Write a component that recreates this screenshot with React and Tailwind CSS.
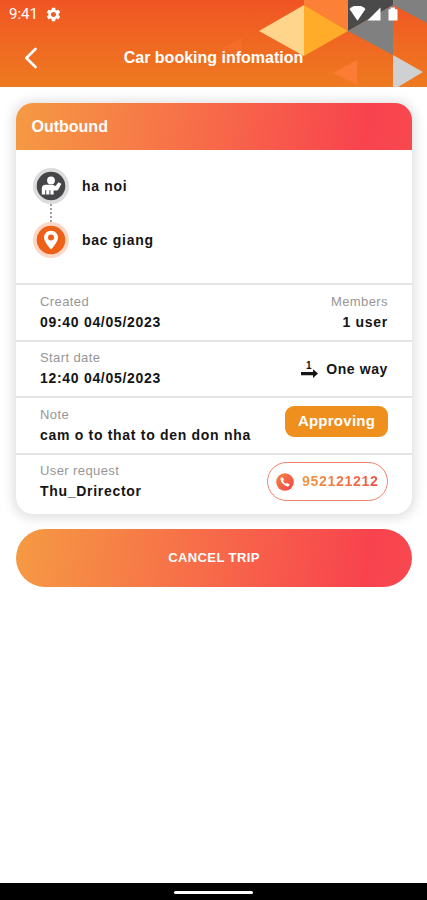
import React from 'react';
import { MdSettings } from 'react-icons/md';

const trip = {
    from: 'ha noi',
    to: 'bac giang',
    created: '09:40 04/05/2023',
    members: '1 user',
    startDate: '12:40 04/05/2023',
    note: 'cam o to that to den don nha',
    status: 'Approving',
    requester: 'Thu_Drirector',
    phone: '952121212',
};

const HeaderPattern = () => (
    <svg className="absolute inset-0" width="427" height="87" viewBox="0 0 427 87">
        <path d="M221 49L242 38V56Z" fill="#f9702f" opacity="0.6" />
        <path d="M333 73L357 60V85Z" fill="#fc7c35" />
        <path d="M304 0H348V31L304 5Z" fill="#fc8036" />
        <path d="M259 31L304 5V56Z" fill="#ffd58c" />
        <path d="M304 5L348 31L304 56Z" fill="#ffac2b" />
        <path d="M348 0H393V5L348 31Z" fill="#4b4a4b" />
        <path d="M348 31L393 5V55Z" fill="#808080" />
        <path d="M393 0H427V23L393 5Z" fill="#808080" />
        <path d="M393 55L423 72L398 87H393Z" fill="#cfd0d1" />
    </svg>
);

const StatusIcons = () => (
    <svg width="50" height="16" viewBox="0 0 50 16" fill="#fff">
        <path d="M0.5 7.5C4.8 4.5 12.2 4.5 16.5 7.5L8.5 14.8Z" transform="translate(0 -9) scale(1 1.6)" />
        <path d="M18.5 14.5L31.5 1.5V14.5Z" />
        <path d="M39.5 3.3H41.5V1.5H46V3.3H48.5V14.5H39.5Z" />
    </svg>
);

const Header = () => (
    <header className="relative h-[87px] shrink-0 overflow-hidden bg-linear-to-b from-[#f05423] to-[#ee7a20] text-white">
        <HeaderPattern />
        <div className="relative flex h-7 items-center justify-between pr-[28px] pl-[9px]">
            <div className="flex items-center gap-[7px]">
                <span className="font-['Roboto',sans-serif] text-[15px]">9:41</span>
                <MdSettings size={17} />
            </div>
            <StatusIcons />
        </div>
        <div className="relative flex h-[59px] items-center">
            <button type="button" className="ml-6 w-[14px]" aria-label="Back">
                <svg width="14" height="22" viewBox="0 0 14 22" fill="none" stroke="#fff" strokeWidth="2.6" strokeLinecap="round" strokeLinejoin="round">
                    <path d="M11.5 2L2.3 11L11.5 20" />
                </svg>
            </button>
            <h1 className="mr-[38px] flex-1 text-center text-[16px] font-bold">Car booking infomation</h1>
        </div>
    </header>
);

const PassengerIcon = () => (
    <svg width="36" height="36" viewBox="0 0 36 36">
        <circle cx="18" cy="18" r="18" fill="#dcdcdc" />
        <circle cx="18" cy="18" r="14.3" fill="#464547" />
        <circle cx="18" cy="12.4" r="3.9" fill="#fff" />
        <path d="M8.8 26.4V20.6Q8.8 16.8 12.6 16.8H19.5L22.6 18L25.4 14.2L28.4 15.8L25.4 21.4Q24.8 22.4 23.5 22.4H20.6V26.4H17.4V22.2H16.4V26.4H13.2V22.2H12.2V26.4Z" fill="#fff" />
    </svg>
);

const PinIcon = () => (
    <svg width="36" height="36" viewBox="0 0 36 36">
        <circle cx="18" cy="18" r="18" fill="#fcd7c5" />
        <circle cx="18" cy="18" r="14.3" fill="#ee5f18" />
        <path d="M18 8.7C14 8.7 11 11.6 11 15.5C11 20.3 18 27.4 18 27.4S25 20.3 25 15.5C25 11.6 22 8.7 18 8.7Z" fill="#fff" />
        <circle cx="18" cy="15.5" r="3" fill="#ee5f18" />
    </svg>
);

const OneWayIcon = () => (
    <div className="flex w-[17px] flex-col items-center">
        <span className="h-[8px] pr-[2px] text-[10px] leading-[9px] font-bold">1</span>
        <svg width="17" height="9" viewBox="0 0 17 9">
            <path d="M0 2.9H12V0.2L17 4.6L12 9V6.3H0Z" fill="#151515" />
        </svg>
    </div>
);

const PhoneIcon = () => (
    <svg width="18" height="18" viewBox="0 0 18 18">
        <defs>
            <linearGradient id="phone" x1="0" y1="0" x2="1" y2="1">
                <stop offset="0" stopColor="#f48442" />
                <stop offset="1" stopColor="#f2444b" />
            </linearGradient>
        </defs>
        <circle cx="9" cy="9" r="8.8" fill="url(#phone)" />
        <path d="M5.2 4.6L6.6 4.2L8 6.8L7.1 7.9Q8 9.7 10 10.8L11.1 9.9L13.6 11.3L13.2 12.8Q12.4 13.7 11.3 13.4Q5.8 11.8 4.5 6.5Q4.4 5.2 5.2 4.6Z" fill="#fff" />
    </svg>
);

const Field = ({ label, value, right }) => (
    <div className={right ? 'text-right' : ''}>
        <p className="text-[13px] leading-[18px] tracking-[0.4px] text-[#969696]">{label}</p>
        <p className="mt-px text-[14px] leading-[20px] font-bold tracking-[0.7px] whitespace-nowrap">{value}</p>
    </div>
);

const Row = ({ children }) => (
    <div className="flex h-[56.5px] justify-between border-t-2 border-[#e4e4e4] pt-[7.5px] pr-6 pl-6">{children}</div>
);

const App = () => {
    return (
        <div className="flex h-[900px] w-[427px] flex-col overflow-hidden bg-white font-['Liberation_Sans',Arial,sans-serif] text-[#151515]">
            <Header />

            <main className="flex-1 pt-[15.5px] pr-[15px] pl-4">
                <section className="h-[411.5px] overflow-hidden rounded-[17px] bg-white shadow-[0_1px_12px_3px_rgba(0,0,0,0.13)]">
                    <div className="flex h-[47.5px] items-center bg-[linear-gradient(98deg,#f59a43_0%,#f76b49_48%,#f8434e_88%,#f8484f_100%)] pt-px pl-[15.5px]">
                        <h2 className="text-[16px] font-bold text-white">Outbound</h2>
                    </div>

                    <div className="h-[133px] pt-[18px] pl-[17px]">
                        <div className="flex items-center gap-[13px]">
                            <PassengerIcon />
                            <span className="text-[14px] font-bold tracking-[0.7px]">{trip.from}</span>
                        </div>
                        <div className="ml-[17px] h-[18px] w-0 border-l-2 border-dotted border-[#a0a0a0]" />
                        <div className="flex items-center gap-[13px]">
                            <PinIcon />
                            <span className="text-[14px] font-bold tracking-[0.7px]">{trip.to}</span>
                        </div>
                    </div>

                    <Row>
                        <Field label="Created" value={trip.created} />
                        <Field label="Members" value={trip.members} right />
                    </Row>
                    <Row>
                        <Field label="Start date" value={trip.startDate} />
                        <div className="flex h-10 items-center gap-2">
                            <OneWayIcon />
                            <span className="text-[14px] font-bold tracking-[0.6px]">One way</span>
                        </div>
                    </Row>
                    <Row>
                        <Field label="Note" value={trip.note} />
                        <span className="flex h-[31px] w-[103px] items-center justify-center rounded-[9px] bg-[#ee8f1e] text-[15px] font-bold tracking-[0.25px] text-white">
                            {trip.status}
                        </span>
                    </Row>
                    <Row>
                        <Field label="User request" value={trip.requester} />
                        <button type="button" className="flex h-[39px] w-[121px] shrink-0 items-center gap-2 rounded-full border border-[#f3806c] pl-2">
                            <PhoneIcon />
                            <span className="bg-linear-to-r from-[#f2953f] to-[#ee5044] bg-clip-text text-[14px] font-bold tracking-[0.7px] text-transparent">
                                {trip.phone}
                            </span>
                        </button>
                    </Row>
                </section>

                <button
                    type="button"
                    className="mt-[14.5px] flex h-[58px] w-full items-center justify-center rounded-full bg-[linear-gradient(98deg,#f59a43_0%,#f76b49_48%,#f8434e_88%,#f8484f_100%)] text-[13px] font-bold tracking-[0.4px] text-white"
                >
                    CANCEL TRIP
                </button>
            </main>

            <footer className="flex h-[17px] items-center justify-center bg-black pt-[2px]">
                <div className="h-[3px] w-[79px] rounded-full bg-white" />
            </footer>
        </div>
    );
};

export default App;
